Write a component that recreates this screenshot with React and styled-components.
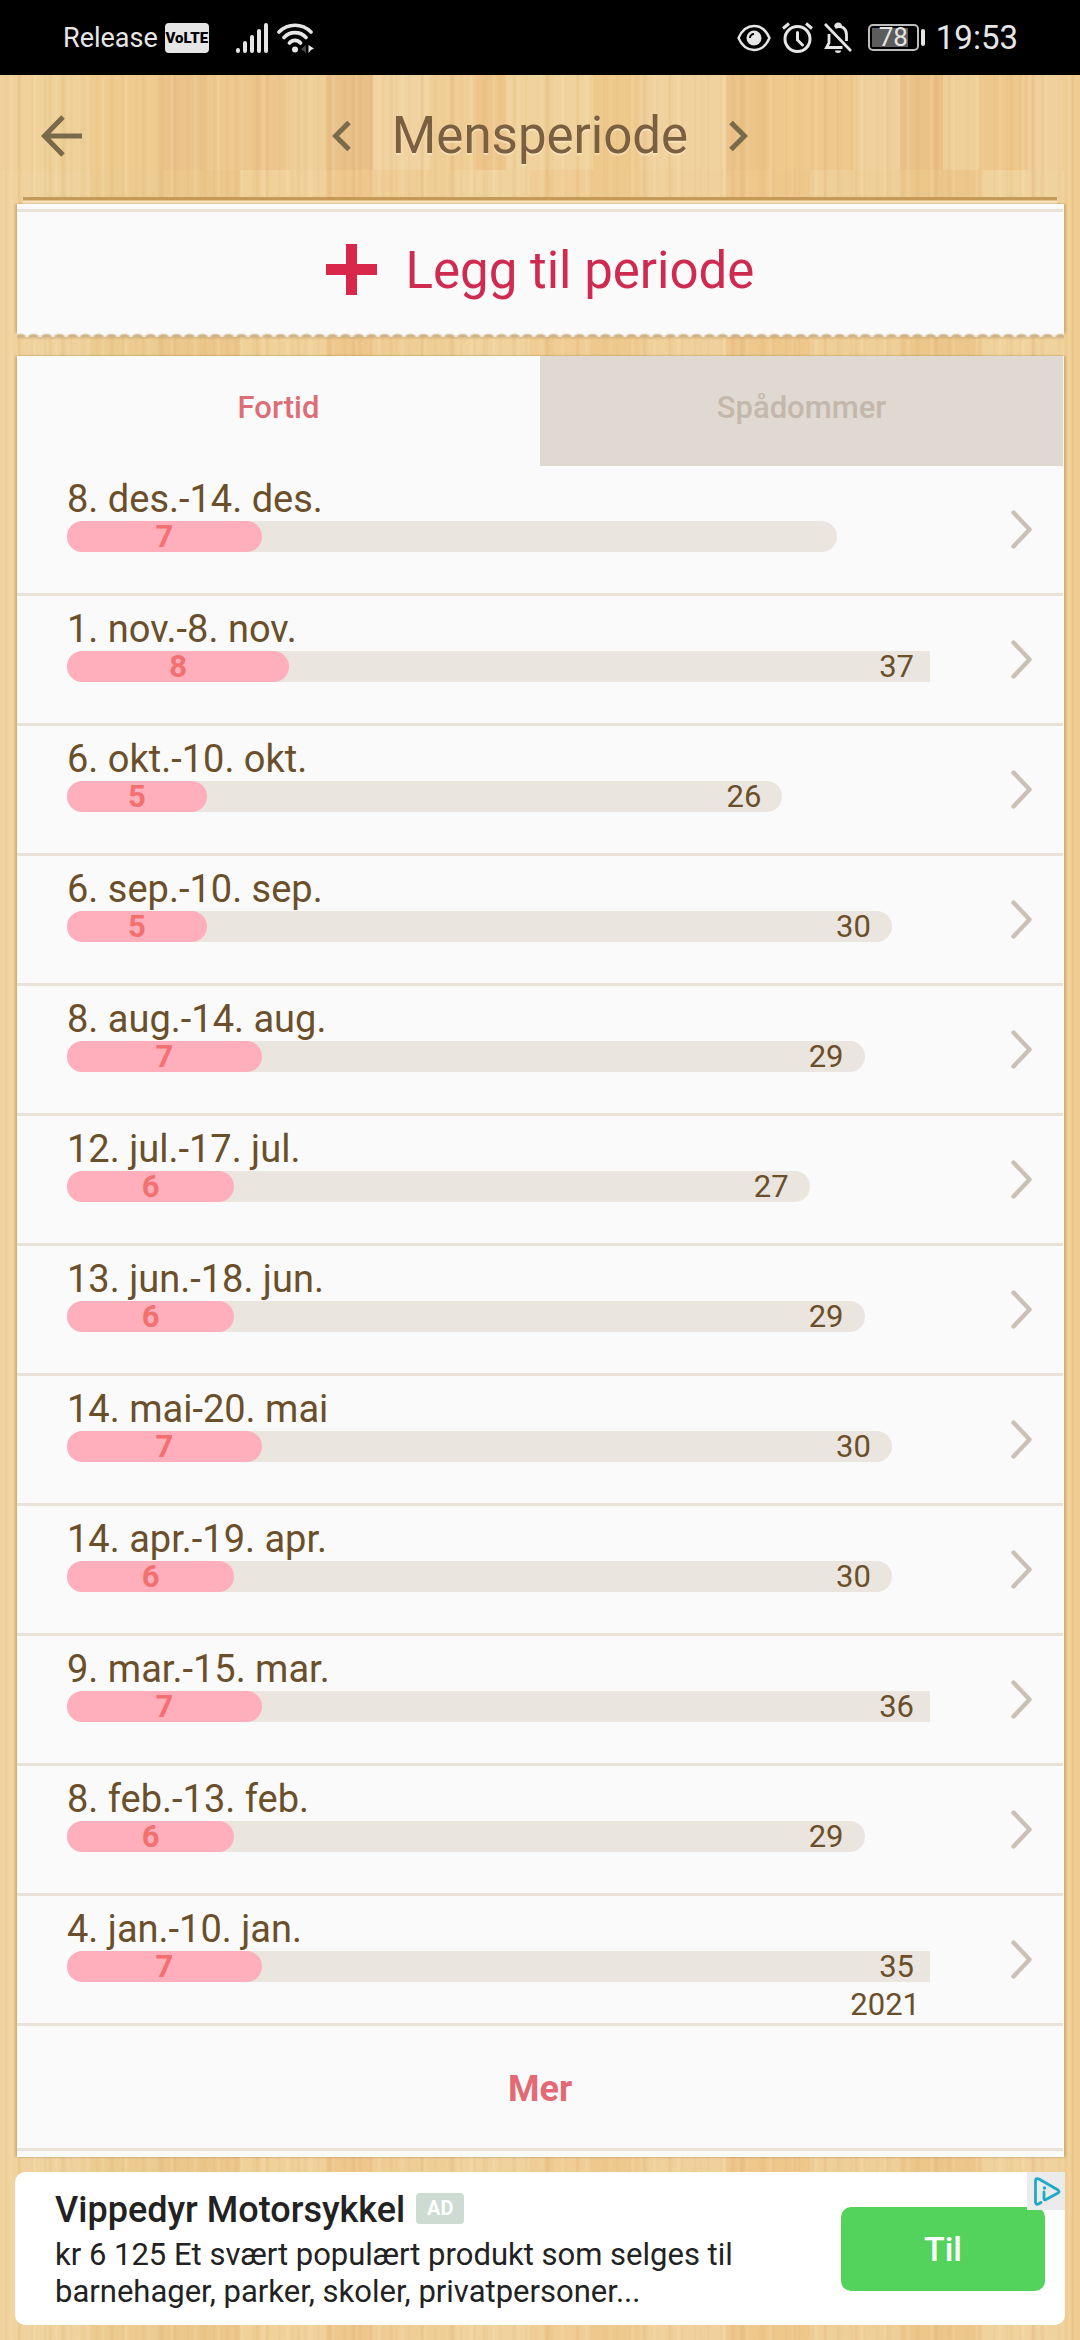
import React, { useState } from 'react'
import styled, { createGlobalStyle } from 'styled-components';

// colour, right edge (px) of every board in the wooden background
const boards = [
    ['#f0d09a', 18], ['#efd199', 90], ['#eecb8f', 162], ['#eac38b', 206],
    ['#edc88f', 240], ['#ecc68c', 290], ['#efcf98', 326], ['#e9c088', 373],
    ['#f0d3a0', 430], ['#efce96', 476], ['#edc58b', 506], ['#f0d39c', 593],
    ['#eec98c', 638], ['#f0d29e', 726], ['#ecc489', 770], ['#eec88c', 854],
    ['#f0d09a', 900], ['#eac187', 943], ['#efcf98', 983], ['#edc78c', 1028],
    ['#f0d19c', 1062], ['#efcd92', 1080]
];

const lowerBoards = [
    ['#f0d29c', 22], ['#efd29d', 90], ['#eccb91', 162], ['#ebc78c', 240],
    ['#f0d19a', 326], ['#edc78c', 373], ['#efce96', 450], ['#f0d29d', 530],
    ['#efcd94', 592], ['#eec98e', 638], ['#f0d19b', 726], ['#edc78c', 810],
    ['#efcf98', 900], ['#ecc78b', 980], ['#f0d29d', 1064], ['#efcd92', 1080]
];

const toGradient = list => {
    let start = 0;
    const stops = list.map(([color, end]) => {
        const stop = `${color} ${start}px ${end}px`;
        start = end;
        return stop;
    });
    return `repeating-linear-gradient(90deg, ${stops.join(', ')})`;
};

const grain = `
    repeating-linear-gradient(90deg, rgba(214,160,90,0) 0 17px, rgba(214,160,90,.16) 19px, rgba(214,160,90,0) 22px 31px),
    repeating-linear-gradient(90deg, rgba(255,236,196,0) 0 9px, rgba(255,236,196,.2) 11px, rgba(255,236,196,0) 14px 23px),
    repeating-linear-gradient(90deg, rgba(205,150,84,0) 0 5px, rgba(205,150,84,.1) 6px, rgba(205,150,84,0) 8px 13px),
    repeating-linear-gradient(90deg, rgba(200,140,76,0) 0 60px, rgba(200,140,76,.16) 63px, rgba(200,140,76,0) 67px 97px)
`;

const GlobalStyle = createGlobalStyle`
    * { box-sizing: border-box; }
    body { margin: 0; background: #efcd94; }
    button { border: 0; padding: 0; margin: 0; background: none; font: inherit; color: inherit; cursor: pointer; }
    svg { display: block; flex: none; }
`;

const Page = styled.div`
    display: flex;
    flex-direction: column;
    min-height: 100vh;
    font-family: Roboto, "Liberation Sans", sans-serif;
    color: #6b4f2a;
    background: ${grain}, ${toGradient(boards)} 0 0 / 100% 170px no-repeat, ${toGradient(lowerBoards)};
`;

const StatusBar = styled.div`
    display: flex;
    justify-content: space-between;
    align-items: center;
    height: 75px;
    padding: 0 62px 0 63px;
    background: #000;
    color: #e6e6e6;
`;

const StatusGroup = styled.div`
    display: flex;
    align-items: center;
    gap: ${props => props.$gap}px;
`;

const Carrier = styled.span`
    font-size: 27px;
    line-height: 30px;
`;

const Volte = styled.span`
    width: 44px;
    margin-right: 20px;
    border-radius: 4px;
    background: #e6e6e6;
    color: #000;
    font-size: 15px;
    font-weight: 900;
    line-height: 30px;
    text-align: center;
`;

const Battery = styled.span`
    display: flex;
    align-items: center;
    gap: 2px;
    margin-left: 5px;
    &::after {
        content: '';
        width: 4px;
        height: 17px;
        border-radius: 2px;
        background: #e6e6e6;
    }
`;

const BatteryCase = styled.span`
    width: 51px;
    border: 2px solid #bdbdbd;
    border-radius: 5px;
    background: linear-gradient(90deg, #5c5c5c 36px, #000 36px) 2px 2px / 43px 19px no-repeat;
    font-size: 26px;
    line-height: 23px;
    text-align: center;
`;

const Clock = styled.time`
    font-size: 33px;
    line-height: 40px;
`;

const Header = styled.header`
    display: grid;
    grid-template-columns: 1fr auto 1fr;
    align-items: center;
    height: 122px;
    padding: 0 41px;
    color: #786a4b;
`;

const BackButton = styled.button`
    justify-self: start;
`;

const TitleNav = styled.div`
    display: flex;
    align-items: center;
    gap: 41px;
`;

const Title = styled.h1`
    margin: 0;
    font-size: 51px;
    font-weight: 400;
    line-height: 60px;
    color: #7a5f40;
    text-shadow: 0 2px 1px rgba(255,240,210,.6);
`;

const Rule = styled.div`
    height: 7px;
    margin: 0 23px;
    background: linear-gradient(#c59a58 3px, #f8e3bd 4px);
`;

const Panel = styled.section`
    display: flow-root;
    margin: 0 16px 0 17px;
    padding-right: 1px;
    background: #fafafa;
    box-shadow: -2px 0 2px rgba(150,115,60,.35), 2px 0 2px rgba(150,115,60,.35);
`;

const AddButton = styled.button`
    display: flex;
    justify-content: center;
    align-items: center;
    gap: 29px;
    width: 100%;
    height: 124px;
    margin-top: 5px;
    padding-bottom: 3px;
    border-top: 3px solid #e8e2d8;
    color: #cf2a50;
    font-size: 51px;
    line-height: 60px;
`;

const TornEdge = styled.div`
    height: 23px;
    margin: 0 16px 0 17px;
    background:
        radial-gradient(ellipse 7px 4px at 50% 100%, #cdb387 50%, #fafafa 100%) -3px 0 / 13px 4px repeat-x,
        linear-gradient(rgba(170,130,75,.4), rgba(170,130,75,0)) 0 3px / 100% 4px no-repeat;
`;

const Tabs = styled.div`
    display: grid;
    grid-template-columns: 1fr 1fr;
`;

const Tab = styled.button`
    height: 110px;
    padding-bottom: 8px;
    font-size: 31px;
    font-weight: 500;
    background: ${props => props.$active ? 'transparent' : '#e0d9d2'};
    color: ${props => props.$active ? '#dc6e76' : '#c3b8ab'};
`;

const List = styled.ul`
    margin: 0;
    padding: 0;
    list-style: none;
`;

const Row = styled.button`
    display: flex;
    align-items: center;
    justify-content: space-between;
    width: 100%;
    padding: 0 30px 0 50px;
    border-bottom: 3px solid #e8e2d8;
    text-align: left;
`;

const Cycle = styled.span`
    flex: 1;
    display: flex;
    flex-direction: column;
    margin-right: 81px;
    padding-top: 12px;
`;

const Dates = styled.span`
    font-size: 38px;
    line-height: 43px;
`;

const BarArea = styled.span`
    display: grid;
    font-size: 31px;
    line-height: 31px;
    > * { grid-area: 1 / 1; }
`;

const Track = styled.span`
    height: 31px;
    padding-right: ${props => props.$cut ? 16 : 21}px;
    border-radius: ${props => props.$cut ? '16px 0 0 16px' : '16px'};
    background: #eae5df;
    text-align: right;
`;

const Bleeding = styled.span`
    border-radius: 16px;
    background: #ffafbb;
    color: #f2706f;
    font-weight: 700;
    text-align: center;
`;

const Year = styled.span`
    height: 36px;
    margin-top: 5px;
    padding-right: 10px;
    font-size: 31px;
    line-height: 36px;
    text-align: right;
`;

const MoreButton = styled.button`
    width: 100%;
    height: 125px;
    margin-bottom: 6px;
    padding-top: 4px;
    border-bottom: 3px solid #e8e2d8;
    color: #e36a74;
    font-size: 36px;
    font-weight: 700;
`;

const Ad = styled.aside`
    position: relative;
    display: flex;
    align-items: center;
    justify-content: space-between;
    margin: 15px;
    padding: 16px 20px 15px 40px;
    border-radius: 10px 0 10px 10px;
    background: #fff;
    color: #222;
`;

const AdTitle = styled.h2`
    display: flex;
    align-items: center;
    gap: 11px;
    margin: 0 0 4px;
    font-size: 36px;
    font-weight: 500;
    line-height: 44px;
`;

const AdBadge = styled.span`
    width: 48px;
    margin-bottom: 4px;
    border-radius: 4px;
    background: #cddbd2;
    color: #fff;
    font-size: 20px;
    font-weight: 700;
    line-height: 31px;
    text-align: center;
`;

const AdText = styled.p`
    max-width: 720px;
    margin: 0;
    font-size: 31px;
    line-height: 37px;
`;

const AdButton = styled.button`
    width: 204px;
    height: 84px;
    border-radius: 10px;
    background: #54d35c;
    color: #fff;
    font-size: 34px;
    font-weight: 500;
`;

const AdChoices = styled.a`
    position: absolute;
    top: 0;
    right: 0;
    padding: 5px 4px 4px 6px;
    background: #ebebeb;
`;

const SignalIcon = () => (
    <svg width="34" height="30" viewBox="0 0 34 30" stroke="#e6e6e6" strokeWidth="4" strokeLinecap="round">
        <path d="M2 27v1M9 20v8M16 14v14M23 8v20M30 2v26" />
    </svg>
);

const WifiIcon = () => (
    <svg width="37" height="30" viewBox="0 0 37 30" fill="none" stroke="#e6e6e6" strokeWidth="3.6" strokeLinecap="round">
        <path d="M2 9C11 0 25 0 34 9M7 14.500c6-6.500 16-6.500 22 0M12.500 20c3-3.500 8-3.500 11 0" />
        <circle cx="18" cy="26.500" r="3" fill="#e6e6e6" stroke="none" />
        <path d="M29 22v8l-5-4z" fill="#444" stroke="none" />
        <path d="M31.500 22l5.500 3.500-3 1.500-2.500 3z" fill="#e6e6e6" stroke="none" />
    </svg>
);

const EyeIcon = () => (
    <svg width="34" height="28" viewBox="0 0 34 28" fill="none" stroke="#e6e6e6" strokeWidth="2.4">
        <path d="M1.500 14C5 6 11 2 17 2s12 4 15.500 12C29 22 23 26 17 26S5 22 1.500 14z" />
        <circle cx="17" cy="14" r="7.500" fill="#e6e6e6" stroke="none" />
        <path d="M13 14a4 4 0 0 1 4-4" stroke="#000" strokeWidth="2" />
    </svg>
);

const AlarmIcon = () => (
    <svg width="31" height="31" viewBox="0 0 31 31" fill="none" stroke="#e6e6e6" strokeWidth="3">
        <circle cx="15.500" cy="17" r="12.500" />
        <path d="M15.500 10.500V18l5 5" strokeLinecap="round" />
        <path d="M1 6.500L7 1.500M30 6.500L24 1.500" />
    </svg>
);

const MutedBellIcon = () => (
    <svg width="28" height="31" viewBox="0 0 28 31" fill="none" stroke="#e6e6e6" strokeWidth="2.8">
        <path d="M1 2l26 27" />
        <path d="M18.500 25.500H2.500l2.500-4.500V12M11 5.500c7-3 11.500 1.500 11.500 7V19" />
        <path d="M11.500 4.500a2.500 2.500 0 1 1 5 0" />
        <path d="M11 28.500a3 2.500 0 0 0 6 0z" fill="#e6e6e6" stroke="none" />
    </svg>
);

const BackIcon = () => (
    <svg width="42" height="42" viewBox="0 0 42 42" fill="none" stroke="currentColor" strokeWidth="5">
        <path d="M22 2L3.500 21 22 40M4 21h37" />
    </svg>
);

const ArrowIcon = ({ flip }) => (
    <svg width="19" height="32" viewBox="0 0 19 32" fill="none" stroke="currentColor" strokeWidth="5">
        <path d={flip ? 'M2 2.500L15.500 16 2 29.500' : 'M17 2.500L3.500 16 17 29.500'} />
    </svg>
);

const PlusIcon = () => (
    <svg width="51" height="54" viewBox="0 0 51 54" fill="#d8274a">
        <path d="M20 0h11v20h20v11H31v20H20V31H0V20h20z" />
    </svg>
);

const ChevronIcon = () => (
    <svg width="22" height="40" viewBox="0 0 22 40" fill="none" stroke="#cbc0b4" strokeWidth="4.400" strokeLinecap="round" strokeLinejoin="round">
        <path d="M2.500 2.500L18.500 19.500 2.500 36.500" />
    </svg>
);

const AdChoicesIcon = () => (
    <svg width="28" height="29" viewBox="0 0 28 29" fill="none" stroke="#1fabc7" strokeWidth="2.800" strokeLinecap="round" strokeLinejoin="round">
        <path d="M11 15V22Q11.500 23.500 13 22.500L25 16Q27 14.500 25 13L6 2Q2.500 0.500 2.500 4V25.500Q3 28 5.500 27L8 25.500" />
        <circle cx="11.500" cy="11" r="1.700" fill="#1fabc7" stroke="none" />
    </svg>
);

// a full track holds this many days, longer cycles are cut off
const DAYS_SHOWN = 31.5;

const barWidth = days => days > DAYS_SHOWN ? '100%' : `calc(${(days / DAYS_SHOWN * 100).toFixed(3)}% + 3px)`;

const cycles = [
    {dates:'8. des.-14. des.',  period:7, length:28, running:true},
    {dates:'1. nov.-8. nov.',   period:8, length:37},
    {dates:'6. okt.-10. okt.',  period:5, length:26},
    {dates:'6. sep.-10. sep.',  period:5, length:30},
    {dates:'8. aug.-14. aug.',  period:7, length:29},
    {dates:'12. jul.-17. jul.', period:6, length:27},
    {dates:'13. jun.-18. jun.', period:6, length:29},
    {dates:'14. mai-20. mai',   period:7, length:30},
    {dates:'14. apr.-19. apr.', period:6, length:30},
    {dates:'9. mar.-15. mar.',  period:7, length:36},
    {dates:'8. feb.-13. feb.',  period:6, length:29},
    {dates:'4. jan.-10. jan.',  period:7, length:35, year:2021}
];

function CycleRow ({ cycle }) {
    return (
        <li>
            <Row type="button">
                <Cycle>
                    <Dates>{cycle.dates}</Dates>
                    <BarArea>
                        <Track $cut={cycle.length > DAYS_SHOWN} style={{width: barWidth(cycle.length)}}>
                            {!cycle.running && cycle.length}
                        </Track>
                        <Bleeding style={{width: barWidth(cycle.period)}}>{cycle.period}</Bleeding>
                    </BarArea>
                    <Year>{cycle.year}</Year>
                </Cycle>
                <ChevronIcon />
            </Row>
        </li>
    );
}

export default function App () {
    const [tab, setTab] = useState('past');

    return (
        <Page>
            <GlobalStyle />
            <StatusBar>
                <StatusGroup $gap={7}>
                    <Carrier>Release</Carrier>
                    <Volte>VoLTE</Volte>
                    <SignalIcon />
                    <WifiIcon />
                </StatusGroup>
                <StatusGroup $gap={11}>
                    <EyeIcon />
                    <AlarmIcon />
                    <MutedBellIcon />
                    <Battery><BatteryCase>78</BatteryCase></Battery>
                    <Clock>19:53</Clock>
                </StatusGroup>
            </StatusBar>

            <Header>
                <BackButton type="button" aria-label="Tilbake"><BackIcon /></BackButton>
                <TitleNav>
                    <button type="button" aria-label="Forrige"><ArrowIcon /></button>
                    <Title>Mensperiode</Title>
                    <button type="button" aria-label="Neste"><ArrowIcon flip /></button>
                </TitleNav>
            </Header>
            <Rule />

            <Panel>
                <AddButton type="button"><PlusIcon />Legg til periode</AddButton>
            </Panel>
            <TornEdge />

            <Panel>
                <Tabs role="tablist">
                    <Tab type="button" role="tab" aria-selected={tab === 'past'} $active={tab === 'past'} onClick={() => setTab('past')}>Fortid</Tab>
                    <Tab type="button" role="tab" aria-selected={tab === 'future'} $active={tab === 'future'} onClick={() => setTab('future')}>Spådommer</Tab>
                </Tabs>
                <List>
                    {cycles.map(cycle => <CycleRow key={cycle.dates} cycle={cycle} />)}
                </List>
                <MoreButton type="button">Mer</MoreButton>
            </Panel>

            <Ad>
                <div>
                    <AdTitle>Vippedyr Motorsykkel <AdBadge>AD</AdBadge></AdTitle>
                    <AdText>kr 6 125 Et svært populært produkt som selges til barnehager, parker, skoler, privatpersoner...</AdText>
                </div>
                <AdButton type="button">Til</AdButton>
                <AdChoices href="#adchoices" aria-label="AdChoices"><AdChoicesIcon /></AdChoices>
            </Ad>
        </Page>
    );
}
